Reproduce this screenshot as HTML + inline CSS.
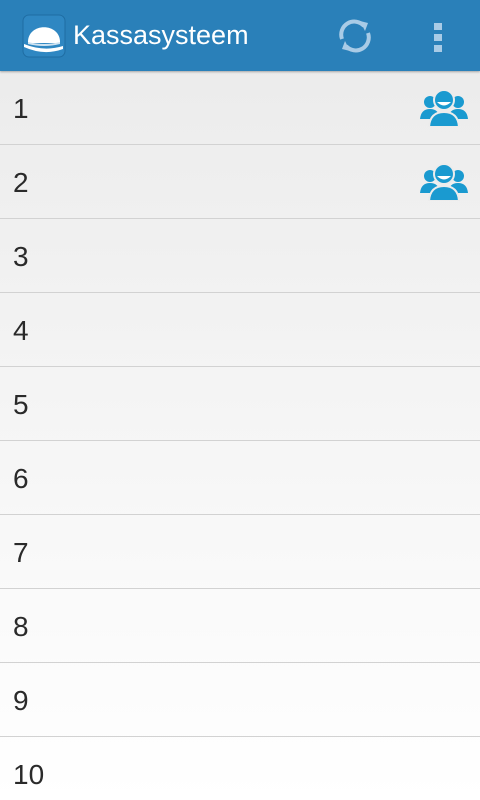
<!DOCTYPE html>
<html style="margin:0;width:480px;height:800px;overflow:hidden;background:#fff"><head><style>
body{margin:0;width:480px;height:800px;overflow:hidden;font-family:"Liberation Sans",sans-serif;background:linear-gradient(#eaeaea,#ffffff);position:relative}
.bar{position:absolute;left:0;top:0;width:480px;height:71px;background:#2a80b9;box-shadow:0 1px 2px rgba(0,0,0,.3);z-index:2}
.title{position:absolute;left:73px;top:20px;color:#fff;font-size:27px}
.row{position:absolute;left:0;width:480px;height:73px;border-bottom:1px solid #d2d2d2}
.row span{position:absolute;left:13px;top:22px;font-size:28px;color:#2a2a2a}
.row svg{position:absolute;left:419px;top:18px}
</style></head><body>
<div class="bar">
<svg style="position:absolute;left:22px;top:14px" width="44" height="44" viewBox="0 0 44 44">
<rect x="1" y="1" width="42" height="42" rx="6" fill="#2f87c2" stroke="#1f6da3"/>
<path d="M6 29 C5 8 39 8 38 29 Z" fill="#fff"/>
<path d="M2 30 Q22 38 41 32 L41 35 Q22 42 2 33 Z" fill="#fff"/>
<path d="M6 28 Q22 32 38 28 L38 30 Q22 34 6 30Z" fill="#cfe3f1"/>
</svg>
<div class="title">Kassasysteem</div>
<svg style="position:absolute;left:336px;top:17px" width="38" height="38" viewBox="0 0 38 38" fill="none" stroke="#a9cbe6" stroke-width="4">
<path d="M6 22 A13 13 0 0 1 28 9"/><path d="M32 16 A13 13 0 0 1 10 29"/>
<path d="M24 4 L32 6 L29 14Z" fill="#a9cbe6" stroke="none"/>
<path d="M14 34 L6 32 L9 24Z" fill="#a9cbe6" stroke="none"/>
</svg>
<div style="position:absolute;left:434px;top:23px;width:8px;height:7px;background:#a9cbe6"></div>
<div style="position:absolute;left:434px;top:34px;width:8px;height:7px;background:#a9cbe6"></div>
<div style="position:absolute;left:434px;top:45px;width:8px;height:7px;background:#a9cbe6"></div>
</div>
<div class="row" style="top:71px"><span>1</span><svg width="50" height="38" viewBox="0 0 50 38" fill="#1a9ad0"><circle cx="11" cy="13" r="6"/><path d="M1 30 Q2 20 11 20 Q20 20 21 30Z"/><circle cx="39" cy="13" r="6"/><path d="M29 30 Q30 20 39 20 Q48 20 49 30Z"/><circle cx="25" cy="11" r="10" stroke="#ececec" stroke-width="2"/><path d="M18 13 Q25 20 32 13Z" fill="#fff"/><path d="M10 38 Q11 23 25 23 Q39 23 40 38Z" stroke="#ececec" stroke-width="2"/></svg></div>
<div class="row" style="top:145px"><span>2</span><svg width="50" height="38" viewBox="0 0 50 38" fill="#1a9ad0"><circle cx="11" cy="13" r="6"/><path d="M1 30 Q2 20 11 20 Q20 20 21 30Z"/><circle cx="39" cy="13" r="6"/><path d="M29 30 Q30 20 39 20 Q48 20 49 30Z"/><circle cx="25" cy="11" r="10" stroke="#ececec" stroke-width="2"/><path d="M18 13 Q25 20 32 13Z" fill="#fff"/><path d="M10 38 Q11 23 25 23 Q39 23 40 38Z" stroke="#ececec" stroke-width="2"/></svg></div>
<div class="row" style="top:219px"><span>3</span></div>
<div class="row" style="top:293px"><span>4</span></div>
<div class="row" style="top:367px"><span>5</span></div>
<div class="row" style="top:441px"><span>6</span></div>
<div class="row" style="top:515px"><span>7</span></div>
<div class="row" style="top:589px"><span>8</span></div>
<div class="row" style="top:663px"><span>9</span></div>
<div class="row" style="top:737px;height:63px;border:none"><span>10</span></div>
</body></html>
